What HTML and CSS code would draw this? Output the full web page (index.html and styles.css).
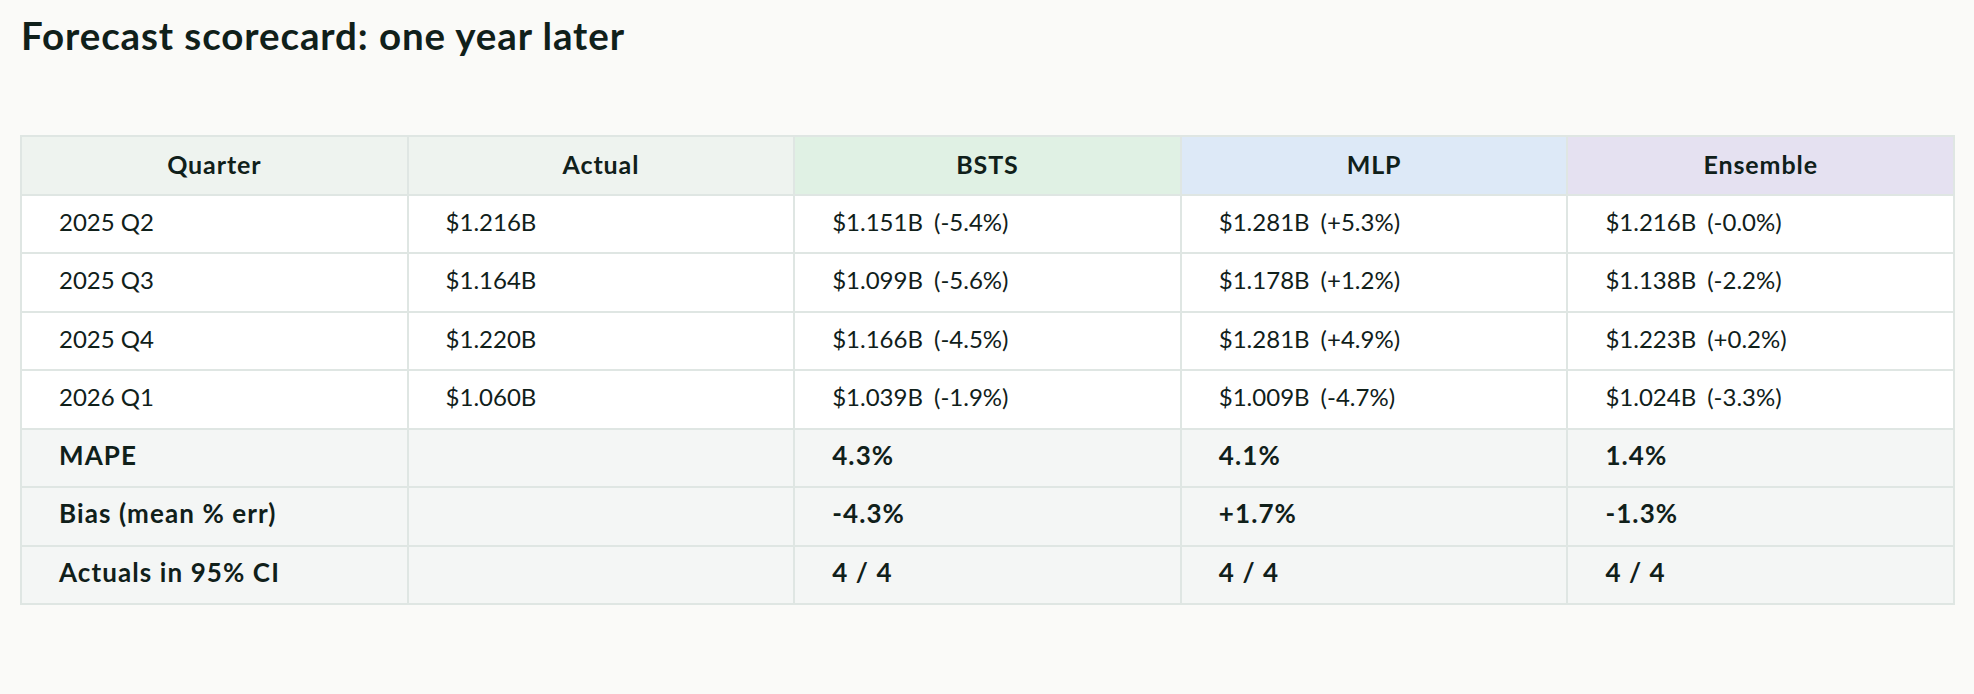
FILE: index.html
```html
<!DOCTYPE html>
<html lang="en">
<head>
<meta charset="utf-8">
<title>Forecast scorecard</title>
<link rel="stylesheet" href="styles.css">
</head>
<body>
<main class="page">
  <h1 class="title">Forecast scorecard: one year later</h1>
  <table class="score">
    <thead>
      <tr>
        <th class="h-plain">Quarter</th>
        <th class="h-plain">Actual</th>
        <th class="h-bsts">BSTS</th>
        <th class="h-mlp">MLP</th>
        <th class="h-ens">Ensemble</th>
      </tr>
    </thead>
    <tbody>
      <tr>
        <td>2025 Q2</td>
        <td>$1.216B</td>
        <td>$1.151B<span class="pct">(-5.4%)</span></td>
        <td>$1.281B<span class="pct">(+5.3%)</span></td>
        <td>$1.216B<span class="pct">(-0.0%)</span></td>
      </tr>
      <tr>
        <td>2025 Q3</td>
        <td>$1.164B</td>
        <td>$1.099B<span class="pct">(-5.6%)</span></td>
        <td>$1.178B<span class="pct">(+1.2%)</span></td>
        <td>$1.138B<span class="pct">(-2.2%)</span></td>
      </tr>
      <tr>
        <td>2025 Q4</td>
        <td>$1.220B</td>
        <td>$1.166B<span class="pct">(-4.5%)</span></td>
        <td>$1.281B<span class="pct">(+4.9%)</span></td>
        <td>$1.223B<span class="pct">(+0.2%)</span></td>
      </tr>
      <tr>
        <td>2026 Q1</td>
        <td>$1.060B</td>
        <td>$1.039B<span class="pct">(-1.9%)</span></td>
        <td>$1.009B<span class="pct">(-4.7%)</span></td>
        <td>$1.024B<span class="pct">(-3.3%)</span></td>
      </tr>
      <tr class="summary">
        <td>MAPE</td>
        <td></td>
        <td>4.3%</td>
        <td>4.1%</td>
        <td>1.4%</td>
      </tr>
      <tr class="summary">
        <td>Bias (mean % err)</td>
        <td></td>
        <td>-4.3%</td>
        <td>+1.7%</td>
        <td>-1.3%</td>
      </tr>
      <tr class="summary">
        <td>Actuals in 95% CI</td>
        <td></td>
        <td>4 / 4</td>
        <td>4 / 4</td>
        <td>4 / 4</td>
      </tr>
    </tbody>
  </table>
</main>
</body>
</html>
```

FILE: styles.css
```css
* { box-sizing: border-box; }

html, body {
  margin: 0;
  padding: 0;
  background: #fafaf8;
}

body {
  font-family: "Lato", "Liberation Sans", sans-serif;
  color: #10201a;
}

.page {
  padding: 12px 19px 0 20px;
}

.title {
  margin: 0 0 77px 1px;
  font-size: 38.5px;
  line-height: 46px;
  font-weight: 700;
  letter-spacing: 0.9px;
}

.score {
  width: 1935px;
  border-collapse: collapse;
  table-layout: fixed;
  font-size: 24px;
}

.score th,
.score td {
  border: 2px solid #dfe6e3;
  padding: 12px 10px 16px 37px;
  line-height: 28.5px;
  text-align: left;
  white-space: nowrap;
}

.score th {
  text-align: center;
  padding-left: 10px;
  padding-top: 13px;
  padding-bottom: 15px;
  font-size: 25px;
  font-weight: 700;
  letter-spacing: 0.9px;
}

.h-plain { background: #eef3ef; }
.h-bsts { background: #e0f1e4; }
.h-mlp { background: #dde9f7; }
.h-ens { background: #e5e1f1; }

.score td { background: #ffffff; font-weight: 400; }

.score .summary td {
  background: #f4f6f5;
  font-weight: 700;
  font-size: 26px;
  letter-spacing: 1.1px;
  padding-top: 11px;
  padding-bottom: 17px;
}

.pct { margin-left: 11px; }
```
